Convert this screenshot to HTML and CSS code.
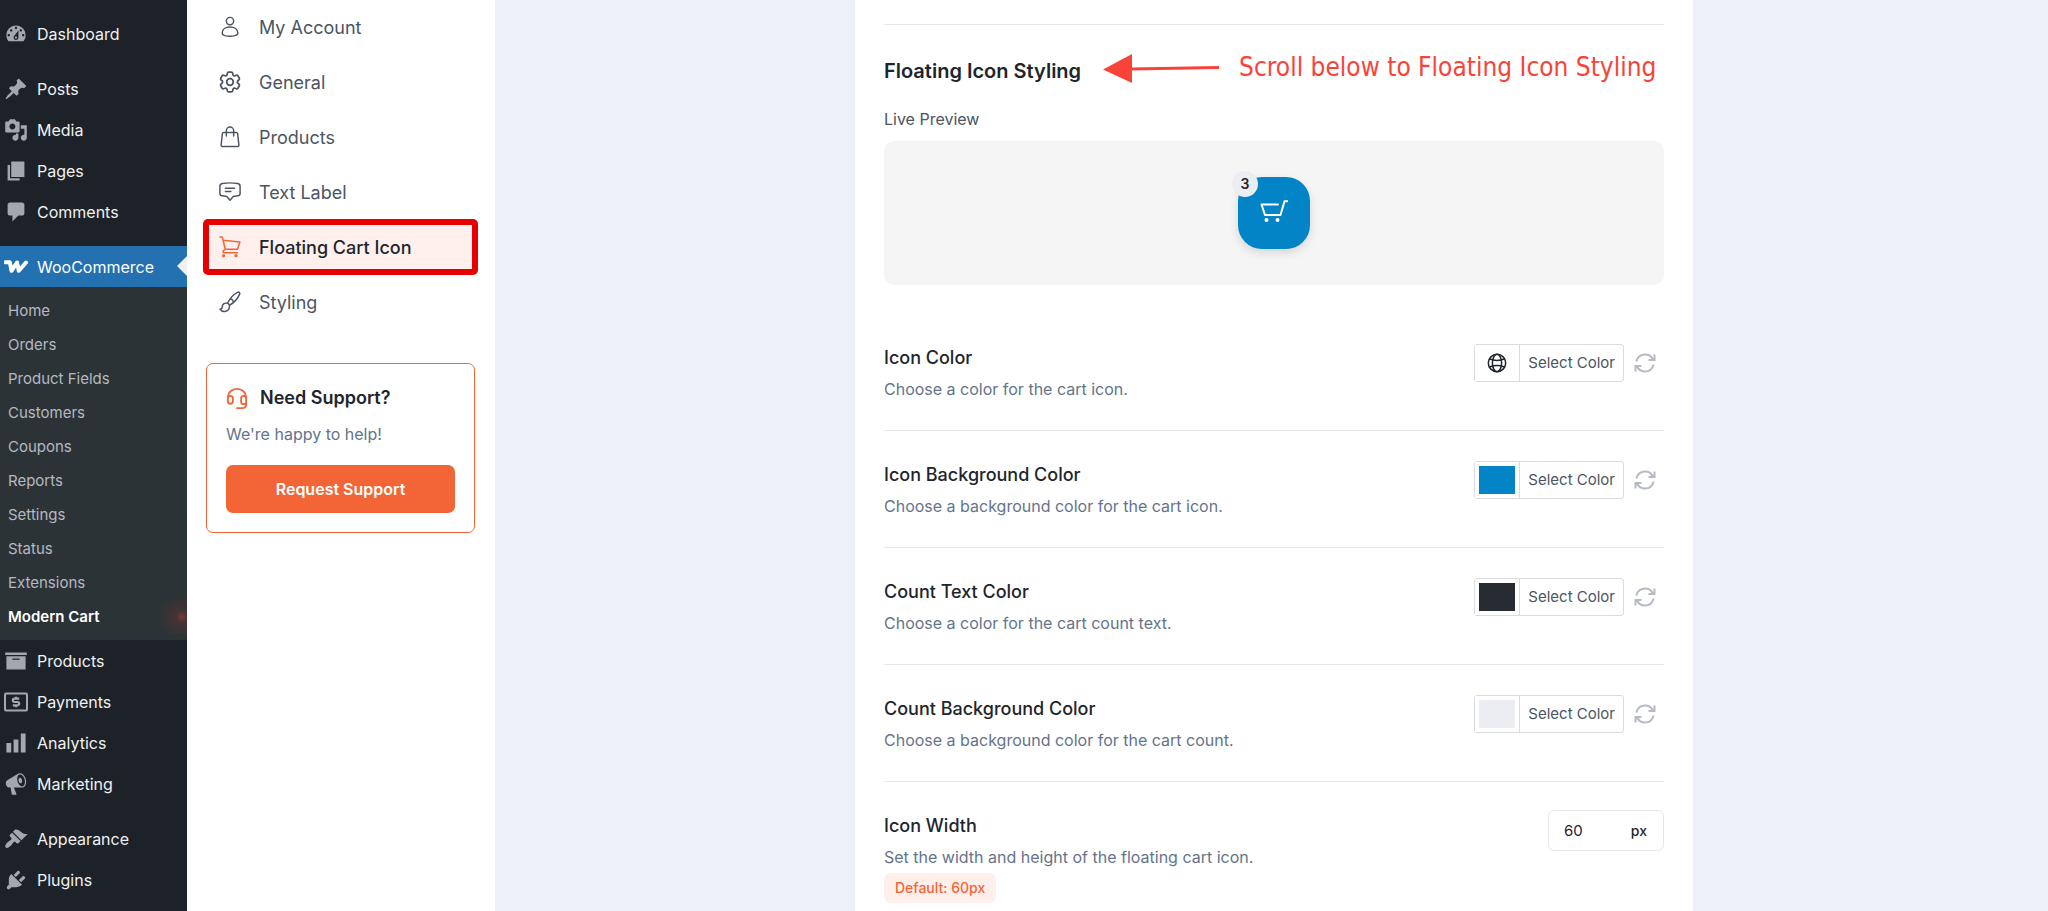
FILE: index.html
```html
<!DOCTYPE html>
<html lang="en">
<head>
    <meta charset="UTF-8">
    <meta name="viewport" content="width=device-width, initial-scale=1.0">
    <title>Modern Cart Settings</title>
    <link rel="stylesheet" href="styles.css">
</head>
<body>

    <!-- WordPress admin menu -->
    <nav class="admin-menu" aria-label="Main menu">
        <ul class="menu-group">
            <li><a class="menu-link" href="#"><svg class="menu-icon" viewBox="0 0 20 20"><path fill-rule="evenodd" d="M3.76 16h12.48c1.1-1.37 1.76-3.11 1.76-5 0-4.42-3.58-8-8-8s-8 3.58-8 8c0 1.89.66 3.63 1.76 5zM10 4c.55 0 1 .45 1 1s-.45 1-1 1-1-.45-1-1 .45-1 1-1zM6 6c.55 0 1 .45 1 1s-.45 1-1 1-1-.45-1-1 .45-1 1-1zm8 0c.55 0 1 .45 1 1s-.45 1-1 1-1-.45-1-1 .45-1 1-1zm-5.37 5.55L12 7v6c0 1.1-.9 2-2 2s-2-.9-2-2c0-.57.24-1.08.63-1.45zM4 10c.55 0 1 .45 1 1s-.45 1-1 1-1-.45-1-1 .45-1 1-1zm12 0c.55 0 1 .45 1 1s-.45 1-1 1-1-.45-1-1 .45-1 1-1zm-5 3c0-.55-.45-1-1-1s-1 .45-1 1 .45 1 1 1 1-.45 1-1z"/></svg>Dashboard</a></li>
        </ul>
        <ul class="menu-group">
            <li><a class="menu-link" href="#"><svg class="menu-icon" viewBox="0 0 20 20"><path d="M10.44 3.02l1.82-1.82 6.36 6.35-1.83 1.82c-1.05-.68-2.48-.57-3.41.36l-.75.75c-.92.93-1.04 2.35-.35 3.41l-1.83 1.82-2.41-2.41-2.8 2.79c-.42.42-3.38 2.71-3.8 2.29s1.86-3.39 2.28-3.81l2.79-2.79L4.1 9.36l1.83-1.82c1.05.69 2.48.57 3.4-.36l.75-.75c.93-.92 1.05-2.35.36-3.41z"/></svg>Posts</a></li>
            <li><a class="menu-link" href="#"><svg class="menu-icon" viewBox="0 0 20 20"><path fill-rule="evenodd" d="M13 11V4c0-.55-.45-1-1-1h-1.67L9 1H5L3.67 3H2c-.55 0-1 .45-1 1v7c0 .55.45 1 1 1h10c.55 0 1-.45 1-1zM7 4.5c1.38 0 2.5 1.12 2.5 2.5S8.38 9.5 7 9.5 4.5 8.38 4.5 7 5.62 4.5 7 4.5zM14 6h5v10.5c0 1.38-1.12 2.5-2.5 2.5S14 17.88 14 16.5s1.12-2.5 2.5-2.5c.17 0 .34.02.5.05V9h-3V6zm-4 8.05V13h2v3.5c0 1.38-1.12 2.5-2.5 2.5S7 17.88 7 16.5 8.12 14 9.5 14c.17 0 .34.02.5.05z"/></svg>Media</a></li>
            <li><a class="menu-link" href="#"><svg class="menu-icon" viewBox="0 0 20 20"><path d="M6 15V2h11v13H6zm-1 1h8v2H3V5h2v11z"/></svg>Pages</a></li>
            <li><a class="menu-link" href="#"><svg class="menu-icon" viewBox="0 0 20 20"><path d="M5 2h10c1.1 0 2 .9 2 2v7c0 1.1-.9 2-2 2h-3l-5 5v-5H5c-1.1 0-2-.9-2-2V4c0-1.1.9-2 2-2z"/></svg>Comments</a></li>
        </ul>
        <ul class="menu-group">
            <li>
                <a class="menu-link current" href="#"><svg class="menu-icon" viewBox="0 0 24 24"><path d="M1.500 7.200H5.800L7.500 15.800 13 7.500 14.800 15.800 22 7.500" fill="none" stroke="#fff" stroke-width="4" stroke-linejoin="round" stroke-linecap="round"/></svg>WooCommerce</a>
                <ul class="submenu">
                    <li><a href="#">Home</a></li>
                    <li><a href="#">Orders</a></li>
                    <li><a href="#">Product Fields</a></li>
                    <li><a href="#">Customers</a></li>
                    <li><a href="#">Coupons</a></li>
                    <li><a href="#">Reports</a></li>
                    <li><a href="#">Settings</a></li>
                    <li><a href="#">Status</a></li>
                    <li><a href="#">Extensions</a></li>
                    <li><a class="active" href="#">Modern Cart</a></li>
                </ul>
            </li>
            <li><a class="menu-link" href="#"><svg class="menu-icon" viewBox="0 0 20 20"><path fill-rule="evenodd" d="M19 3v2H1V3h18zM2 6h16v11H2V6zm11 3V8H7v1h6z"/></svg>Products</a></li>
            <li><a class="menu-link" href="#"><svg class="menu-icon" viewBox="0 0 24 24"><rect x="1" y="3.500" width="22" height="17" rx="1" fill="none" stroke="currentColor" stroke-width="2"/><path d="M15.200 8.700h-4.700a1.600 1.600 0 0 0 0 3.300h3a1.600 1.600 0 0 1 0 3.300H8.800M12 6.800v2M12 15.200v2" fill="none" stroke="currentColor" stroke-width="2.200"/></svg>Payments</a></li>
            <li><a class="menu-link" href="#"><svg class="menu-icon" viewBox="0 0 20 20"><path d="M18 18V2h-4v16h4zm-6 0V7H8v11h4zm-6 0v-8H2v8h4z"/></svg>Analytics</a></li>
            <li><a class="menu-link" href="#"><svg class="menu-icon" viewBox="0 0 20 20"><path fill-rule="evenodd" d="M18.150 5.940c.46 1.620.38 3.220-.02 4.480-.42 1.280-1.260 2.180-2.300 2.480-.16.060-.26.060-.4.060-.06.020-.12.020-.18.020-.06.020-.14.020-.22.020h-6.800l2.220 5.500c.02.140-.06.260-.14.340-.08.100-.24.160-.34.160H6.950c-.1 0-.26-.06-.34-.16-.08-.08-.16-.2-.14-.34l-1-5.500H4.250l-.02-.02c-.5.060-1.080-.18-1.540-.62s-.88-1.080-1.060-1.880c-.24-.8-.2-1.560-.02-2.200.18-.62.580-1.080 1.060-1.300l.02-.02 9-5.400c.1-.06.180-.1.240-.16.060-.04.140-.08.240-.12.160-.08.280-.12.500-.18 1.040-.3 2.240.1 3.220.98s1.840 2.240 2.260 3.860zm-2.580 5.980h-.02c.4-.1.740-.34 1.040-.7.580-.7.860-1.760.86-3.040 0-.64-.1-1.300-.28-1.980-.34-1.360-1.020-2.500-1.780-3.240s-1.680-1.100-2.460-.88c-.82.220-1.400.960-1.700 2-.32 1.040-.28 2.360.060 3.720.38 1.360 1 2.500 1.800 3.240.78.740 1.620 1.100 2.480.88zm-2.540-7.080c.22-.04.42-.02.62.04.38.16.76.48 1.020 1s.42 1.200.42 1.780c0 .3-.04.56-.12.8-.18.48-.44.84-.86.94-.34.1-.8-.06-1.140-.4s-.64-.86-.78-1.500c-.18-.62-.12-1.240.02-1.720s.48-.84.82-.94z"/></svg>Marketing</a></li>
        </ul>
        <ul class="menu-group">
            <li><a class="menu-link" href="#"><svg class="menu-icon" viewBox="0 0 20 20"><path d="M14.480 11.060L7.410 3.990l1.500-1.500c.5-.56 2.300-.47 3.510.32 1.210.8 1.430 1.280 2.910 2.100 1.180.64 2.450 1.260 4.450.85zm-.71.71L6.700 4.700 4.930 6.470c-.39.39-.39 1.020 0 1.410l1.060 1.060c.39.39.39 1.030 0 1.420-.6.6-1.430 1.110-2.210 1.690-.35.26-.7.53-1.010.84C1.430 14.230.4 16.080 1.400 17.070c.99 1 2.840-.03 4.180-1.360.31-.31.580-.66.850-1.020.57-.78 1.080-1.610 1.690-2.210.39-.39 1.020-.39 1.410 0l1.060 1.060c.39.39 1.020.39 1.410 0z"/></svg>Appearance</a></li>
            <li><a class="menu-link" href="#"><svg class="menu-icon" viewBox="0 0 20 20"><path d="M13.110 4.360L9.870 7.600 8 5.730l3.240-3.240c.35-.34 1.050-.2 1.560.32.520.51.660 1.210.31 1.550zm-8 1.770l.91-1.120 9.010 9.010-1.190.84c-.71.71-2.630 1.160-3.820 1.160H6.140L4.900 17.260c-.59.59-1.540.59-2.120 0-.59-.58-.59-1.530 0-2.120l1.240-1.240v-3.880c0-1.130.4-3.190 1.090-3.890zm7.260 3.970l3.240-3.240c.34-.35 1.040-.21 1.550.31.520.51.660 1.210.31 1.550l-3.240 3.250z"/></svg>Plugins</a></li>
        </ul>
    </nav>

    <!-- Plugin settings navigation -->
    <aside class="settings-side">
        <nav class="settings-nav" aria-label="Settings">
            <a href="#"><svg class="nav-icon" viewBox="0 0 24 24"><circle cx="12" cy="5.500" r="4"/><path d="M3.500 18.500c0-4 3.700-6.500 8.500-6.500s8.500 2.500 8.500 6.500c0 1.700-1.500 2.500-3 2.900-3.300.8-7.700.8-11 0-1.500-.4-3-1.200-3-2.900z"/></svg>My Account</a>
            <a href="#"><svg class="nav-icon" viewBox="2 2 20 20"><circle cx="12" cy="12" r="3"/><path d="M9.594 3.940c.09-.542.56-.94 1.110-.94h2.593c.55 0 1.020.398 1.110.94l.213 1.281c.063.374.313.686.645.87.074.04.147.083.22.127.325.196.72.257 1.075.124l1.217-.456a1.125 1.125 0 0 1 1.370.49l1.296 2.247a1.125 1.125 0 0 1-.26 1.431l-1.003.827c-.293.241-.438.613-.43.992a7.723 7.723 0 0 1 0 .255c-.008.378.137.75.43.991l1.004.827c.424.35.534.955.26 1.430l-1.298 2.247a1.125 1.125 0 0 1-1.369.491l-1.217-.456c-.355-.133-.75-.072-1.076.124a6.470 6.470 0 0 1-.22.128c-.331.183-.581.495-.644.869l-.213 1.281c-.09.543-.56.94-1.110.94h-2.594c-.55 0-1.019-.398-1.110-.94l-.213-1.281c-.062-.374-.312-.686-.644-.87a6.520 6.520 0 0 1-.22-.127c-.325-.196-.72-.257-1.076-.124l-1.217.456a1.125 1.125 0 0 1-1.369-.49l-1.297-2.247a1.125 1.125 0 0 1 .26-1.431l1.004-.827c.292-.24.437-.613.43-.991a6.932 6.932 0 0 1 0-.255c.007-.38-.138-.751-.43-.992l-1.004-.827a1.125 1.125 0 0 1-.26-1.430l1.297-2.247a1.125 1.125 0 0 1 1.370-.491l1.216.456c.356.133.751.072 1.076-.124.072-.044.146-.086.22-.128.332-.183.582-.495.644-.869l.214-1.280z"/></svg>General</a>
            <a href="#"><svg class="nav-icon" viewBox="0 0 24 24"><path d="M5 7h14c.7 0 1.200.5 1.300 1.100l1.400 12.700c.1.800-.5 1.500-1.300 1.500H3.600c-.8 0-1.400-.7-1.300-1.500L3.700 8.100c.1-.6.600-1.100 1.300-1.100zM8 11V5.200a4 4 0 0 1 8 0V11"/></svg>Products</a>
            <a href="#"><svg class="nav-icon" viewBox="0 0 24 24"><path d="M3.500 2.800c5.600-1 11.400-1 17 0 1.300.3 2.500 1.300 2.500 2.700v8c0 1.400-1.100 2.500-2.500 2.700l-5 .7L12 21l-3.500-4.100-5-.7C2.100 16 1 14.900 1 13.500v-8c0-1.400 1.200-2.400 2.500-2.700zM7 8h10M7 11.500h6"/></svg>Text Label</a>
            <a class="selected" href="#"><svg class="nav-icon" viewBox="0 0 24 24"><path d="M1 1.200h1.500c.7 0 1.200.4 1.400 1L6.800 14.500M4.500 4.600L22.800 6.500l-2.600 8H6.800L4.900 16c-1.100.9-.5 2.300.9 2.300H20"/><circle cx="5" cy="21.500" r="1"/><circle cx="18.500" cy="21.500" r="1"/></svg>Floating Cart Icon</a>
            <a href="#"><svg class="nav-icon" viewBox="0 0 24 24"><path d="M9.200 13.400C11 9.500 15.500 3.800 20.300 1.400c1.500-.7 2.800.5 2.200 2-2 4.800-6.500 9.600-11.200 12.200M9.200 13.400c1.200.3 1.900 1.100 2.100 2.200M9.200 13.400c-3.500-.8-5.500 1.200-5.700 4.200-.1 1.700-1.300 2.100-2.500 2.200 1 1.600 3.200 2.700 5.500 2.500 3.400-.2 5.500-3.200 4.800-6.700M12.500 8.500c1.500.6 2.900 1.800 3.400 3.500"/></svg>Styling</a>
        </nav>

        <section class="support-card">
            <h2><svg class="support-icon" viewBox="0 0 24 24"><path d="M2 14v-3a10 9 0 0 1 20 0v8a4 4 0 0 1-4 4h-6M2 14v1.500a2.500 2.500 0 0 0 5.500 0v-3a2.500 2.500 0 0 0-5.500 0zM22 13v3a2.500 2.500 0 0 1-5.500 0v-3.500a2.500 2.500 0 0 1 5.500 0"/></svg>Need Support?</h2>
            <p>We're happy to help!</p>
            <button type="button" class="support-button">Request Support</button>
        </section>
    </aside>

    <main class="content">
        <div class="panel">
            <header class="section-head">
                <h1>Floating Icon Styling</h1>
                <svg class="arrow" viewBox="0 0 116 30"><path d="M0 15.500L29 0v29z" fill="#f84438"/><path d="M28 15L116 13.500" stroke="#f84438" stroke-width="3"/></svg>
                <span class="callout">Scroll below to Floating Icon Styling</span>
            </header>

            <p class="preview-label">Live Preview</p>
            <div class="preview">
                <div class="cart-button">
                    <svg class="cart-icon" viewBox="0 0 28 22"><path d="M18 4.500H1.500l3.500 10.500h15.500L24.500 1.200H27.500" fill="none" stroke="#fff" stroke-width="2" stroke-linejoin="round" stroke-linecap="round"/><circle cx="6.500" cy="20" r="2" fill="#fff"/><circle cx="17.500" cy="20" r="2" fill="#fff"/></svg>
                    <span class="cart-count">3</span>
                </div>
            </div>

            <div class="setting">
                <div class="setting-text">
                    <h3>Icon Color</h3>
                    <p>Choose a color for the cart icon.</p>
                </div>
                <div class="color-control">
                    <button type="button" class="picker"><span class="swatch"><svg class="globe" viewBox="0 0 20 20"><circle cx="10" cy="10" r="8.700"/><ellipse cx="10" cy="10" rx="4.600" ry="8.700"/><path d="M2.500 6c4.500 1.700 10.500 1.700 15 0M2.500 14c4.500-1.700 10.500-1.700 15 0"/></svg></span><span class="picker-text">Select Color</span></button>
                    <button type="button" class="reset" aria-label="Reset icon color"><svg viewBox="0 0 22 20"><path d="M2.300 8.500C3.500 4.300 7 1.500 11 1.500c3.500 0 6.300 1.800 7.800 4.800M14.500 7H20.500V1.500M19.700 11.500c-1.200 4.200-4.700 7-8.700 7-3.500 0-6.300-1.800-7.800-4.800M7.500 13H1.500v5.500"/></svg></button>
                </div>
            </div>

            <div class="setting">
                <div class="setting-text">
                    <h3>Icon Background Color</h3>
                    <p>Choose a background color for the cart icon.</p>
                </div>
                <div class="color-control">
                    <button type="button" class="picker"><span class="swatch swatch-blue"></span><span class="picker-text">Select Color</span></button>
                    <button type="button" class="reset" aria-label="Reset icon background color"><svg viewBox="0 0 22 20"><path d="M2.300 8.500C3.500 4.300 7 1.500 11 1.500c3.500 0 6.300 1.800 7.800 4.800M14.500 7H20.500V1.500M19.700 11.500c-1.200 4.200-4.700 7-8.700 7-3.500 0-6.300-1.800-7.800-4.800M7.500 13H1.500v5.500"/></svg></button>
                </div>
            </div>

            <div class="setting">
                <div class="setting-text">
                    <h3>Count Text Color</h3>
                    <p>Choose a color for the cart count text.</p>
                </div>
                <div class="color-control">
                    <button type="button" class="picker"><span class="swatch swatch-dark"></span><span class="picker-text">Select Color</span></button>
                    <button type="button" class="reset" aria-label="Reset count text color"><svg viewBox="0 0 22 20"><path d="M2.300 8.500C3.500 4.300 7 1.500 11 1.500c3.500 0 6.300 1.800 7.800 4.800M14.500 7H20.500V1.500M19.700 11.500c-1.200 4.200-4.700 7-8.700 7-3.500 0-6.300-1.800-7.800-4.800M7.500 13H1.500v5.500"/></svg></button>
                </div>
            </div>

            <div class="setting">
                <div class="setting-text">
                    <h3>Count Background Color</h3>
                    <p>Choose a background color for the cart count.</p>
                </div>
                <div class="color-control">
                    <button type="button" class="picker"><span class="swatch swatch-light"></span><span class="picker-text">Select Color</span></button>
                    <button type="button" class="reset" aria-label="Reset count background color"><svg viewBox="0 0 22 20"><path d="M2.300 8.500C3.500 4.300 7 1.500 11 1.500c3.500 0 6.300 1.800 7.800 4.800M14.500 7H20.500V1.500M19.700 11.500c-1.200 4.200-4.700 7-8.700 7-3.500 0-6.300-1.800-7.800-4.800M7.500 13H1.500v5.500"/></svg></button>
                </div>
            </div>

            <div class="setting">
                <div class="setting-text">
                    <h3><label for="iconWidth">Icon Width</label></h3>
                    <p>Set the width and height of the floating cart icon.</p>
                    <span class="default-tag">Default: 60px</span>
                </div>
                <div class="size-field">
                    <input type="text" id="iconWidth" name="iconWidth" value="60">
                    <span>px</span>
                </div>
            </div>
        </div>
    </main>

</body>
</html>
```
FILE: styles.css
```css
* {
    box-sizing: border-box;
}

body {
    margin: 0;
    height: 100vh;
    overflow: hidden;
    display: grid;
    grid-template-columns: 187px 308px 1fr;
    font-family: Inter, "Liberation Sans", sans-serif;
    background-color: #edf0f9;
    color: #1e252c;
}

h1, h2, h3, p, ul {
    margin: 0;
    padding: 0;
}

ul {
    list-style: none;
}

a {
    text-decoration: none;
}

button, input {
    font-family: inherit;
}

/* Admin menu */
.admin-menu {
    background-color: #1d2228;
    padding-top: 13px;
    display: flex;
    flex-direction: column;
    gap: 14px;
    overflow: hidden;
}

.menu-link {
    display: flex;
    align-items: center;
    gap: 9px;
    height: 41px;
    padding-left: 4px;
    color: #f0f0f1;
    font-size: 16px;
}

.menu-icon {
    width: 24px;
    height: 24px;
    flex-shrink: 0;
    fill: #a2a7b0;
    color: #a2a7b0;
}

.menu-link.current {
    position: relative;
    background-color: #2371b1;
    color: #fff;
}

/* Arrow pointing at the open page */
.menu-link.current::after {
    content: "";
    position: absolute;
    right: 0;
    top: 10px;
    border: 10px solid transparent;
    border-left-width: 0;
    border-right-color: #f0f0f1;
}

.submenu {
    background-color: #2c3337;
    padding: 7px 0 6px;
}

.submenu a {
    display: block;
    padding-left: 8px;
    font-size: 15px;
    line-height: 34px;
    color: #b4b9c2;
}

.submenu .active {
    color: #fff;
    font-weight: 600;
    background-image: radial-gradient(circle at 182px 17px, #7c3734 0, #443335 6px, #2c3337 24px);
}

/* Settings sidebar */
.settings-side {
    background-color: #fff;
    padding: 2px 20px 2px 19px;
    overflow: hidden;
}

.settings-nav {
    display: flex;
    flex-direction: column;
    gap: 5px;
}

.settings-nav a {
    display: flex;
    align-items: center;
    gap: 18px;
    height: 50px;
    padding-left: 13px;
    color: #4b5563;
    font-size: 18px;
}

.nav-icon, .support-icon {
    width: 22px;
    height: 22px;
    fill: none;
    stroke: currentColor;
    stroke-width: 1.6;
    stroke-linecap: round;
    stroke-linejoin: round;
}

.settings-nav .selected {
    background-color: #fff0ed;
    color: #1e252c;
    font-weight: 500;
    outline: 6px solid #e60000;
    outline-offset: -3px;
    border-radius: 2px;
}

.selected .nav-icon {
    color: #f36536;
}

.support-card {
    margin-top: 36px;
    padding: 20px 19px 19px;
    border: 1px solid #f36536;
    border-radius: 7px;
}

.support-card h2 {
    display: flex;
    align-items: center;
    gap: 12px;
    font-size: 18px;
    font-weight: 600;
    line-height: 28px;
}

.support-icon {
    color: #f36536;
    stroke-width: 2;
}

.support-card p {
    margin-top: 10px;
    font-size: 16px;
    line-height: 24px;
    color: #64748b;
}

.support-button {
    width: 100%;
    height: 48px;
    margin-top: 19px;
    border: 0;
    border-radius: 7px;
    background-color: #f36536;
    color: #fff;
    font-size: 16px;
    font-weight: 600;
}

/* Settings panel */
.content {
    padding-left: 5px;
    overflow: hidden;
}

.panel {
    max-width: 838px;
    height: 100%;
    margin: 0 auto;
    padding: 24px 29px 0;
    background-color: #fff;
}

.section-head {
    display: flex;
    align-items: flex-start;
    border-top: 1px solid #e5e7eb;
    padding-top: 26px;
}

.section-head h1 {
    font-size: 20px;
    font-weight: 600;
    line-height: 40px;
    white-space: nowrap;
}

.arrow {
    width: 116px;
    height: 30px;
    margin: 3px 0 0 22px;
    flex-shrink: 0;
}

.callout {
    margin-left: 20px;
    font-family: "DejaVu Sans Condensed", "DejaVu Sans", sans-serif;
    font-size: 26px;
    line-height: 32px;
    color: #f84438;
    white-space: nowrap;
}

.preview-label {
    margin-top: 16px;
    font-size: 16px;
    line-height: 24px;
    color: #4b5563;
}

.preview {
    display: flex;
    align-items: center;
    justify-content: center;
    height: 144px;
    margin: 10px 0 29px;
    border-radius: 10px;
    background-color: #f5f5f5;
}

.cart-button {
    position: relative;
    display: flex;
    align-items: center;
    justify-content: center;
    width: 72px;
    height: 72px;
    border-radius: 24px;
    background-color: #0284c7;
    box-shadow: 0 4px 10px rgba(0, 0, 0, 0.12);
}

.cart-icon {
    width: 28px;
    height: 22px;
    margin-bottom: 4px;
}

.cart-count {
    position: absolute;
    top: -6px;
    left: -6px;
    width: 26px;
    height: 26px;
    border-radius: 50%;
    background-color: #ebedf2;
    font-size: 14px;
    font-weight: 600;
    line-height: 26px;
    text-align: center;
}

.setting {
    display: flex;
    justify-content: space-between;
    align-items: flex-start;
    padding: 28px 0 30px;
    border-bottom: 1px solid #e5e7eb;
}

.setting:last-child {
    border-bottom: 0;
}

.setting-text {
    padding-top: 4px;
}

.setting h3 {
    font-size: 18px;
    font-weight: 500;
    line-height: 24px;
}

.setting p {
    margin-top: 8px;
    font-size: 16px;
    line-height: 22px;
    color: #64748b;
}

.default-tag {
    display: inline-block;
    margin-top: 5px;
    padding: 0 11px;
    border-radius: 7px;
    background-color: #ffefeb;
    color: #f36536;
    font-size: 14px;
    font-weight: 500;
    line-height: 30px;
}

.color-control {
    display: flex;
    align-items: center;
    gap: 10px;
    padding: 2px 8px 0 0;
}

.picker {
    display: flex;
    height: 38px;
    padding: 0;
    border: 1px solid #d9dbe0;
    border-radius: 3px;
    background-color: #fff;
    color: #4b5563;
    font-size: 15px;
}

/* White ring between the swatch and the border */
.swatch {
    display: flex;
    align-items: center;
    justify-content: center;
    width: 44px;
    height: 36px;
    border: 4px solid #fff;
    flex-shrink: 0;
}

.swatch-blue {
    background-color: #0284c7;
}

.swatch-dark {
    background-color: #262c31;
}

.swatch-light {
    background-color: #ebedf2;
}

.picker-text {
    border-left: 1px solid #d9dbe0;
    padding: 0 8px;
    line-height: 36px;
}

.globe {
    width: 20px;
    height: 20px;
    fill: none;
    stroke: #1e252c;
    stroke-width: 1.5;
}

.reset {
    width: 22px;
    height: 22px;
    padding: 0;
    border: 0;
    background: none;
}

.reset svg {
    display: block;
    width: 22px;
    height: 20px;
    fill: none;
    stroke: #b5bac4;
    stroke-width: 2;
}

.size-field {
    display: flex;
    align-items: center;
    justify-content: space-between;
    width: 116px;
    height: 41px;
    padding: 0 16px 0 15px;
    border: 1px solid #e5e7eb;
    border-radius: 6px;
    font-size: 14px;
    font-weight: 500;
}

.size-field input {
    width: 48px;
    padding: 0;
    border: 0;
    outline: none;
    color: #1e252c;
    font-size: 15px;
}
```
